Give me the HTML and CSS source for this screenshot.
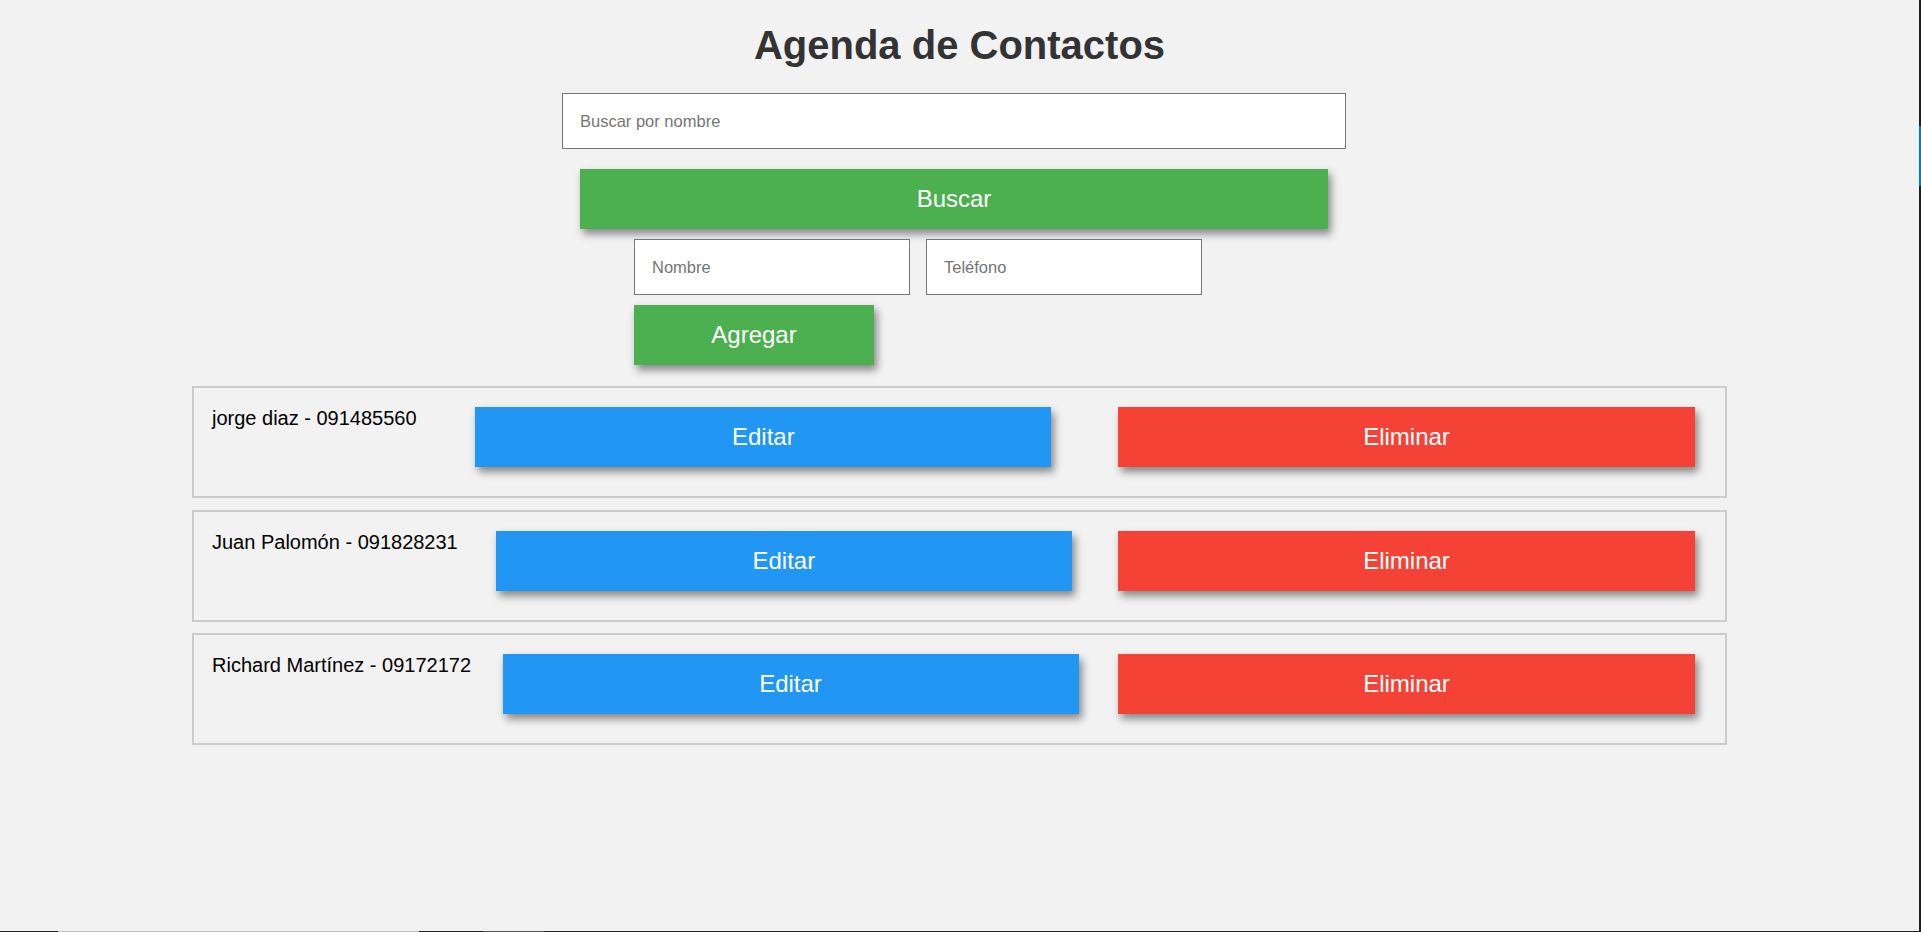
FILE: index.html
```html
<!DOCTYPE html>
<html lang="es">
<head>
<meta charset="utf-8">
<title>Agenda de Contactos</title>
<link rel="stylesheet" href="styles.css">
</head>
<body>
<main class="page">
  <h1 class="title">Agenda de Contactos</h1>
  <section class="search">
    <input class="field field-search" type="text" placeholder="Buscar por nombre">
    <button class="btn btn-green btn-search">Buscar</button>
  </section>
  <form class="add-form">
    <div class="add-fields">
      <input class="field field-small" type="text" placeholder="Nombre">
      <input class="field field-small" type="text" placeholder="Teléfono">
    </div>
    <button type="button" class="btn btn-green btn-add">Agregar</button>
  </form>
  <ul class="contacts">
    <li class="contact">
      <span class="contact-text">jorge diaz - 091485560</span>
      <button class="btn btn-blue btn-edit">Editar</button>
      <button class="btn btn-red btn-delete">Eliminar</button>
    </li>
    <li class="contact">
      <span class="contact-text">Juan Palomón - 091828231</span>
      <button class="btn btn-blue btn-edit">Editar</button>
      <button class="btn btn-red btn-delete">Eliminar</button>
    </li>
    <li class="contact">
      <span class="contact-text">Richard Martínez - 09172172</span>
      <button class="btn btn-blue btn-edit">Editar</button>
      <button class="btn btn-red btn-delete">Eliminar</button>
    </li>
  </ul>
</main>
<div class="edge-right"><span class="edge-mark"></span></div>
<div class="edge-bottom">
  <span class="seg seg-dark seg-a"></span>
  <span class="seg seg-light seg-b"></span>
  <span class="seg seg-dark seg-c"></span>
  <span class="seg seg-mid seg-d"></span>
  <span class="seg seg-dark seg-e"></span>
</div>
</body>
</html>
```

FILE: styles.css
```css
* { box-sizing: border-box; }

html, body { height: 100%; }

body {
  margin: 0 2px 0 0;
  background: #f2f2f2;
  font-family: "Liberation Sans", Arial, sans-serif;
  color: #000;
  overflow: hidden;
}

.page {
  width: 1535px;
  margin: 0 auto;
  padding-top: 22px;
}

.title {
  margin: 0;
  text-align: center;
  font-size: 40px;
  line-height: 46px;
  font-weight: bold;
  color: #333;
}

.search {
  margin: 25px 0 0 370px;
  width: 784px;
  display: flex;
  flex-direction: column;
  align-items: center;
  gap: 20px;
}

.field {
  height: 56px;
  border: 1px solid #767676;
  background: #fff;
  font-family: "Liberation Sans", Arial, sans-serif;
  font-size: 16.5px;
  color: #000;
  padding: 0 17px;
  border-radius: 0;
  outline: none;
}

.field::placeholder { color: #757575; }

.field-search { width: 784px; }

.btn {
  border: none;
  border-radius: 0;
  color: #fff;
  font-family: "Liberation Sans", Arial, sans-serif;
  font-size: 24px;
  height: 60px;
  cursor: pointer;
  box-shadow: 3px 5px 8px rgba(0, 0, 0, 0.45);
  padding: 0;
}

.btn-green { background: #4caf50; }
.btn-blue { background: #2196f3; }
.btn-red { background: #f44336; }

.btn-search { width: 748px; }

.add-form {
  margin: 10px 0 0 442px;
  display: flex;
  flex-direction: column;
  align-items: flex-start;
  gap: 10px;
}

.add-fields {
  display: flex;
  gap: 16px;
}

.field-small { width: 276px; }

.btn-add { width: 240px; }

.contacts {
  list-style: none;
  margin: 21px 0 0;
  padding: 0;
}

.contact {
  display: flex;
  justify-content: space-between;
  align-items: flex-start;
  height: 112px;
  margin-bottom: 11.5px;
  border: 2px solid #ccc;
  padding: 19px 30px 0 18px;
}

.contact-text {
  font-size: 20px;
  line-height: 23px;
  color: #000;
}

.btn-edit { width: 576px; margin-right: 8px; }
.btn-delete { width: 577px; }

.edge-right {
  position: fixed;
  top: 0;
  right: 0;
  width: 2px;
  height: 100%;
  background: #1f1f1f;
}

.edge-mark {
  position: absolute;
  top: 126px;
  left: 0;
  width: 2px;
  height: 60px;
  background: #0078d4;
}

.edge-bottom {
  position: fixed;
  left: 0;
  bottom: 0;
  width: 100%;
  height: 1px;
  display: flex;
}

.seg { height: 1px; }
.seg-dark { background: #222; }
.seg-light { background: #bdbdbd; }
.seg-mid { background: #555; }
.seg-a { width: 58px; }
.seg-b { width: 361px; }
.seg-c { width: 64px; }
.seg-d { width: 61px; }
.seg-e { flex: 1; }
```
